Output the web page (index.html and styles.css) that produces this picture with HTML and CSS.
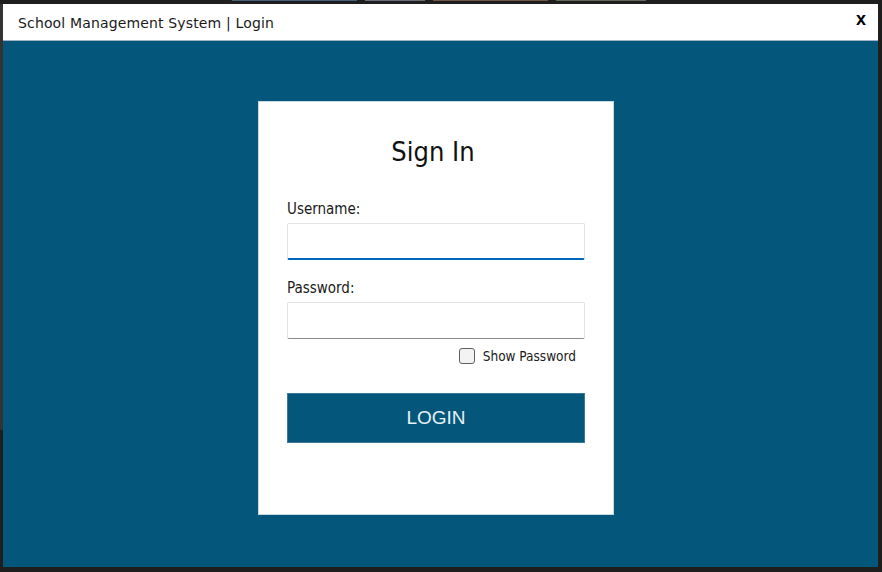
FILE: index.html
```html
<!DOCTYPE html>
<html>
<head>
<meta charset="utf-8">
<link rel="stylesheet" href="styles.css">
</head>
<body>
<div class="desk">
  <div class="strip">
    <span class="frag f1"></span><span class="frag f2"></span><span class="frag f3"></span><span class="frag f4"></span>
  </div>
  <div class="row">
    <div class="side"></div>
    <div class="window">
      <div class="titlebar">
        <span class="title">School Management System | Login</span>
        <span class="close">x</span>
      </div>
      <div class="client">
        <div class="card">
          <h1 class="heading">Sign In</h1>
          <label class="label">Username:</label>
          <div class="input input-active"></div>
          <label class="label label-pw">Password:</label>
          <div class="input"></div>
          <div class="show">
            <span class="check"></span>
            <span class="show-text">Show Password</span>
          </div>
          <div class="btn">LOGIN</div>
        </div>
      </div>
    </div>
  </div>
</div>
</body>
</html>
```
FILE: styles.css
```css
* { box-sizing: border-box; }
html, body { margin: 0; padding: 0; }
body {
  width: 882px;
  height: 572px;
  overflow: hidden;
  background: #1e1e1e;
  font-family: "DejaVu Sans Condensed", "DejaVu Sans", sans-serif;
}
.desk { width: 882px; height: 572px; }
.strip {
  height: 4px;
  display: flex;
  align-items: flex-start;
  padding-left: 232px;
  gap: 8px;
  background: #1e1e1e;
}
.frag { height: 1px; display: block; opacity: 0.6; }
.f1 { width: 125px; background: #5b8db0; }
.f2 { width: 60px; background: #9aa4ab; }
.f3 { width: 115px; background: #a87a62; }
.f4 { width: 90px; background: #8f9a84; }
.row { display: flex; }
.side { width: 3px; height: 426px; background: #333333; }
.window {
  width: 875px;
  height: 563px;
  display: flex;
  flex-direction: column;
  background: #ffffff;
}
.titlebar {
  height: 37px;
  display: flex;
  align-items: center;
  justify-content: space-between;
  padding: 0 12px 0 15px;
  border-bottom: 1px solid #9fb4c2;
}
.title {
  font-family: "DejaVu Sans", sans-serif;
  font-size: 14px;
  letter-spacing: 0.15px;
  color: #1a1a1a;
  padding-top: 2px;
}
.close {
  font-family: "Liberation Sans", Arial, sans-serif;
  font-weight: bold;
  font-size: 18px;
  color: #000;
  margin-top: -6px;
}
.client {
  flex: 1;
  background: #04577a;
  padding: 60px 0 0 255px;
}
.card {
  width: 356px;
  height: 414px;
  background: #fff;
  border: 1px solid #c9d9e3;
  padding: 34px 28px 0 28px;
  display: flex;
  flex-direction: column;
}
.heading {
  margin: 0;
  text-align: center;
  font-weight: normal;
  font-size: 27px;
  line-height: 32px;
  color: #111;
  padding-right: 6px;
}
.label {
  display: block;
  font-size: 15px;
  line-height: 18px;
  color: #1a1a1a;
  margin-top: 32px;
}
.label-pw { margin-top: 19px; }
.input {
  margin-top: 5px;
  height: 37px;
  border: 1px solid #e3e3e3;
  border-bottom: 1px solid #8a8a8a;
  border-radius: 2px;
}
.input-active { border-bottom: 2px solid #0067c0; }
.show {
  display: flex;
  align-items: center;
  justify-content: flex-end;
  margin-top: 9px;
  padding-right: 9px;
  gap: 8px;
}
.check {
  width: 16px;
  height: 16px;
  border: 1px solid #5f5f5f;
  border-radius: 3px;
  background: #f3f3f3;
}
.show-text {
  font-size: 13.5px;
  color: #1a1a1a;
}
.btn {
  margin-top: 29px;
  height: 50px;
  background: #04577a;
  color: #e6f0f5;
  font-family: "Liberation Sans", Arial, sans-serif;
  font-size: 19px;
  display: flex;
  align-items: center;
  justify-content: center;
  border: 1px solid #3b7a98;
}
```
